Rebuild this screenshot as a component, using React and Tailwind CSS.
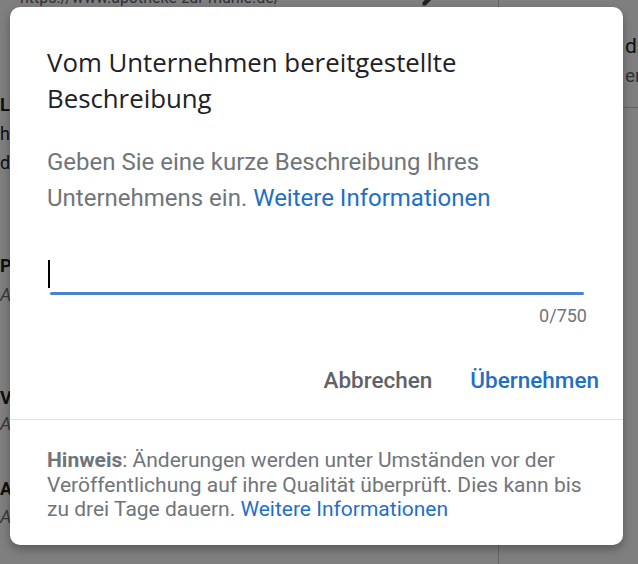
import React from "react";

function Background() {
  return (
    <div className="w-[638px] h-[564px] bg-white flex text-[#202124]" style={{ fontFamily: "Roboto, sans-serif" }}>
      <div className="w-[499px] shrink-0 border-r border-[#c8c8c8] flex flex-col">
        <div className="h-[20px] -mt-[12px] flex items-center">
          <div className="w-[420px] shrink-0 text-[16px] pl-[20px] text-[#5f6368] whitespace-nowrap">https://www.apotheke-zur-mühle.de/</div>
          <svg width="20" height="20" viewBox="0 0 24 24" fill="#3c4043">
            <path d="M3 17.25V21h3.75L17.81 9.94l-3.75-3.75L3 17.25zM20.71 7.04a1 1 0 0 0 0-1.41l-2.34-2.34a1 1 0 0 0-1.41 0l-1.83 1.83 3.75 3.75 1.83-1.83z" />
          </svg>
        </div>
        <div className="flex flex-col pt-[82px]">
          <div className="text-[18px] font-bold leading-[29px]">Link</div>
          <div className="text-[18px] leading-[29px]">https://</div>
          <div className="text-[18px] leading-[29px]">de</div>
          <div className="text-[18px] font-bold leading-[29px] mt-[74px]">Produkte</div>
          <div className="text-[18px] italic text-[#70757a] leading-[29px]">Angeben</div>
          <div className="text-[18px] font-bold leading-[26px] mt-[76px]">Verkauf</div>
          <div className="text-[18px] italic text-[#70757a] leading-[26px]">Angeben</div>
          <div className="text-[18px] font-bold leading-[28px] mt-[38px]">Apps</div>
          <div className="text-[18px] italic text-[#70757a] leading-[28px]">Angeben</div>
        </div>
      </div>
      <div className="flex-1 min-w-0 overflow-hidden flex flex-col">
        <div className="pl-[126px] pt-[31px] text-[21px] leading-[30px] whitespace-nowrap">ds</div>
        <div className="pl-[126px] text-[19px] leading-[30px] text-[#5f6368] whitespace-nowrap">erwähnt</div>
        <div className="border-b border-[#c8c8c8] mt-[16px]"></div>
      </div>
    </div>
  );
}

export default function App() {
  return (
    <div className="relative w-[638px] h-[564px] overflow-hidden">
      <Background />
      <div className="absolute inset-0 bg-black/50"></div>
      <div className="absolute left-[10px] top-[7px] w-[613px] h-[538px] bg-white rounded-[10px] shadow-[0_4px_10px_rgba(0,0,0,0.3)] flex flex-col">
        <div className="pl-[37px] pr-[36px] pt-[37px]">
          <div
            className="text-[25.8px] leading-[36px] text-[#202124]"
            style={{ fontFamily: "'Open Sans', sans-serif" }}
          >
            Vom Unternehmen bereitgestellte Beschreibung
          </div>
          <div
            className="mt-[28px] text-[24px] leading-[36px] text-[#70757a] pr-[40px]"
            style={{ fontFamily: "Roboto, sans-serif" }}
          >
            Geben Sie eine kurze Beschreibung Ihres Unternehmens ein.{" "}
            <span className="text-[#1f6fc5]">Weitere Informationen</span>
          </div>
          <div className="mt-[44px] flex flex-col">
            <div className="h-[28px] flex items-start">
              <div className="w-[2px] h-[28px] bg-black ml-[1px]"></div>
            </div>
            <div className="mt-[4px] h-[3px] bg-[#4a82d8] ml-[3px] mr-[3px] rounded-full"></div>
            <div
              className="mt-[11px] text-right text-[18px] leading-[20px] text-[#70757a]"
              style={{ fontFamily: "Roboto, sans-serif" }}
            >
              0/750
            </div>
          </div>
        </div>
        <div
          className="mt-[40px] flex justify-end items-center gap-[38px] pr-[24px] text-[22.5px] leading-[28px] font-medium"
          style={{ fontFamily: "Roboto, sans-serif" }}
        >
          <span className="text-[#5f6368]">Abbrechen</span>
          <span className="text-[#1f6fc5]">Übernehmen</span>
        </div>
        <div className="mt-[25px] border-t border-[#e0e0e0]"></div>
        <div
          className="pl-[37px] pr-[30px] pt-[28px] text-[21px] leading-[24.5px] text-[#70757a]"
          style={{ fontFamily: "Roboto, sans-serif" }}
        >
          <span className="font-bold">Hinweis</span>: Änderungen werden unter Umständen vor der Veröffentlichung auf ihre Qualität überprüft. Dies kann bis zu drei Tage dauern.{" "}
          <span className="text-[#1f6fc5]">Weitere Informationen</span>
        </div>
      </div>
    </div>
  );
}
